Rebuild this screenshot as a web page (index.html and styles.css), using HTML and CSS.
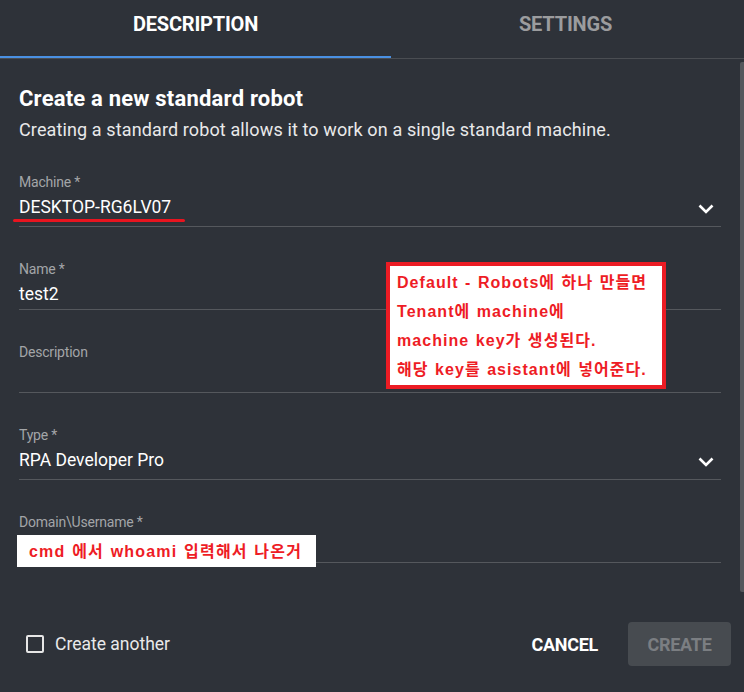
FILE: index.html
```html
<!DOCTYPE html>
<html lang="ko">
<head>
<meta charset="utf-8">
<link rel="stylesheet" href="styles.css">
</head>
<body>
<div class="dialog">
  <div class="tabs">
    <div class="tab active">DESCRIPTION</div>
    <div class="tab">SETTINGS</div>
  </div>
  <div class="content">
    <h1 class="title">Create a new standard robot</h1>
    <p class="subtitle">Creating a standard robot allows it to work on a single standard machine.</p>

    <div class="field select">
      <div class="label">Machine *</div>
      <div class="value">DESKTOP-RG6LV07</div>
      <svg class="chevron" viewBox="0 0 16 10" width="16" height="10"><polyline points="1.5,1.5 8,8 14.5,1.5" fill="none" stroke="#fff" stroke-width="2.6"/></svg>
      <div class="red-underline"></div>
    </div>

    <div class="field">
      <div class="label">Name *</div>
      <div class="value">test2</div>
    </div>

    <div class="field">
      <div class="label">Description</div>
      <div class="value"></div>
    </div>

    <div class="field select">
      <div class="label">Type *</div>
      <div class="value">RPA Developer Pro</div>
      <svg class="chevron" viewBox="0 0 16 10" width="16" height="10"><polyline points="1.5,1.5 8,8 14.5,1.5" fill="none" stroke="#fff" stroke-width="2.6"/></svg>
    </div>

    <div class="field">
      <div class="label">Domain\Username *</div>
      <div class="value"></div>
      <div class="note-small">cmd 에서 whoami 입력해서 나온거</div>
    </div>

    <div class="note-box">
      <div>Default - Robots에 하나 만들면</div>
      <div>Tenant에 machine에</div>
      <div>machine key가 생성된다.</div>
      <div>해당 key를 asistant에 넣어준다.</div>
    </div>
  </div>
  <div class="footer">
    <label class="check"><span class="box"></span><span>Create another</span></label>
    <div class="actions">
      <button class="btn cancel">CANCEL</button>
      <button class="btn create">CREATE</button>
    </div>
  </div>
  <div class="scrollbar"></div>
</div>
</body>
</html>
```

FILE: styles.css
```css
* { box-sizing: border-box; }
html, body {
  margin: 0;
  padding: 0;
  background: #2e3239;
}
body {
  font-family: Roboto, "Noto Sans", sans-serif;
  color: #ffffff;
  width: 744px;
  height: 692px;
  overflow: hidden;
}
.dialog {
  position: relative;
  width: 744px;
  height: 692px;
  background: #2e3239;
}
.tabs {
  display: flex;
  height: 59px;
  border-bottom: 1px solid #4a4d52;
  padding-right: 4px;
}
.tab {
  flex: 1;
  display: flex;
  align-items: center;
  justify-content: center;
  padding-bottom: 8px;
  font-size: 20px;
  font-weight: 700;
  color: #9b9c9e;
  letter-spacing: -0.2px;
  border-bottom: 2px solid transparent;
}
.tab:first-child { flex: 0 0 391px; }
.tab.active {
  color: #ffffff;
  border-bottom-color: #4a90e2;
}
.content {
  position: relative;
  padding: 25px 23px 0 19px;
}
.title {
  margin: 0;
  font-size: 22px;
  font-weight: 700;
  line-height: 30px;
  letter-spacing: 0.2px;
  color: #ffffff;
}
.subtitle {
  margin: 4px 0 0;
  font-size: 18px;
  line-height: 24px;
  letter-spacing: 0.12px;
  color: #e9e9ea;
}
.field {
  position: relative;
  margin-top: 34px;
  padding-bottom: 1px;
  border-bottom: 1px solid #55585d;
}
.field.select { padding-bottom: 5px; }
.subtitle + .field { margin-top: 32px; }
.label {
  font-size: 14px;
  line-height: 16px;
  color: #a3a5a8;
  letter-spacing: -0.2px;
}
.value {
  margin-top: 3px;
  font-size: 17.5px;
  line-height: 28px;
  height: 28px;
  color: #ffffff;
}
.chevron {
  position: absolute;
  right: 7px;
  top: 30px;
}
.red-underline {
  position: absolute;
  left: -6px;
  top: 45px;
  width: 172px;
  height: 3px;
  border-radius: 2px;
  background: #e8141f;
}
.note-small {
  position: absolute;
  left: -2px;
  top: 21px;
  width: 299px;
  height: 32px;
  background: #ffffff;
  color: #ee1c25;
  font-family: "Liberation Sans", "Noto Sans CJK KR", sans-serif;
  font-weight: 700;
  font-size: 16px;
  line-height: 30px;
  padding-top: 2px;
  letter-spacing: 1.2px;
  word-spacing: 1px;
  padding-left: 12px;
  white-space: nowrap;
}
.note-box {
  position: absolute;
  left: 386px;
  top: 203px;
  width: 280px;
  height: 127px;
  background: #ffffff;
  border: 4px solid #ec1c24;
  color: #ee1c25;
  font-family: "Liberation Sans", "Noto Sans CJK KR", sans-serif;
  font-weight: 700;
  font-size: 16px;
  line-height: 29px;
  letter-spacing: 1.05px;
  word-spacing: 1px;
  padding: 2px 0 0 7px;
  white-space: nowrap;
}
.footer {
  position: absolute;
  left: 0;
  right: 0;
  top: 622px;
  height: 44px;
  display: flex;
  align-items: center;
  justify-content: space-between;
  padding: 0 13px 0 26px;
}
.check {
  display: flex;
  align-items: center;
  gap: 11px;
  font-size: 17.5px;
  color: #e9e9ea;
}
.box {
  width: 18px;
  height: 18px;
  border: 2px solid #e6e6e6;
  border-radius: 2px;
}
.actions {
  display: flex;
  align-items: center;
  gap: 28px;
}
.btn {
  font-family: Roboto, sans-serif;
  font-size: 18px;
  font-weight: 700;
  border: none;
  background: none;
  letter-spacing: -0.3px;
}
.cancel {
  color: #ffffff;
  padding: 0 2px;
}
.create {
  width: 103px;
  height: 44px;
  border-radius: 4px;
  background: #474b50;
  color: #7b7e82;
}
.scrollbar {
  position: absolute;
  right: 0;
  top: 62px;
  width: 4px;
  height: 530px;
  border-radius: 2px 0 0 2px;
  background: #54575c;
}
```
